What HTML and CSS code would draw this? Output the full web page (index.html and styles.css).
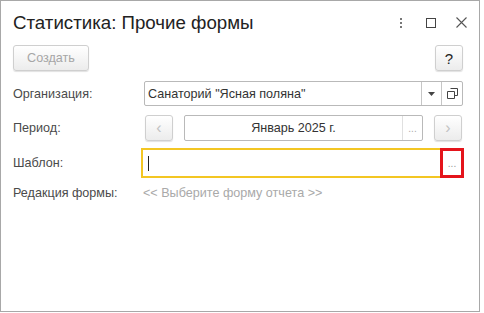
FILE: index.html
```html
<!DOCTYPE html>
<html lang="ru">
<head>
  <meta charset="UTF-8" />
  <title>Статистика: Прочие формы</title>
  <link rel="stylesheet" href="styles.css">
</head>
<body>
  <div class="window">
    <div class="header">
      <div class="title">Статистика: Прочие формы</div>
      <div class="win-controls">
        <span class="ctl kebab"><i></i><i></i><i></i></span>
        <span class="ctl square"></span>
        <span class="ctl close">
          <svg width="11" height="11" viewBox="0 0 11 11"><path d="M0.5 0.5L10.5 10.5M10.5 0.5L0.5 10.5" stroke="#555" stroke-width="1.1" fill="none"/></svg>
        </span>
      </div>
    </div>

    <div class="toolbar">
      <button class="btn btn-create" disabled>Создать</button>
      <button class="btn btn-help">?</button>
    </div>

    <div class="row row-org">
      <div class="label">Организация:</div>
      <div class="field field-org">
        <span class="value">Санаторий "Ясная поляна"</span>
        <span class="fbtn drop"><svg width="7" height="4" viewBox="0 0 7 4"><path d="M0 0H7L3.5 4Z" fill="#444"/></svg></span>
        <span class="fbtn open">
          <svg width="11" height="11" viewBox="0 0 11 11"><path d="M3.5 0.5H10.5V7.5H7.5M0.5 3.5H7.5V10.5H0.5Z" stroke="#444" stroke-width="1" fill="none"/></svg>
        </span>
      </div>
    </div>

    <div class="row row-period">
      <div class="label">Период:</div>
      <div class="period">
        <button class="btn btn-arrow">&lsaquo;</button>
        <div class="field field-period">
          <span class="value">Январь 2025 г.</span>
          <span class="fbtn dots">...</span>
        </div>
        <button class="btn btn-arrow">&rsaquo;</button>
      </div>
    </div>

    <div class="row row-template">
      <div class="label">Шаблон:</div>
      <div class="template">
        <div class="template-input"><span class="caret"></span></div>
        <div class="template-btn">...</div>
      </div>
    </div>

    <div class="row row-edition">
      <div class="label">Редакция формы:</div>
      <div class="hint">&lt;&lt; Выберите форму отчета &gt;&gt;</div>
    </div>
  </div>
</body>
</html>
```
FILE: styles.css
```css
body {
  margin: 0;
  background: #fff;
  font-family: "Liberation Sans", Arial, sans-serif;
  color: #4a4a4a;
  font-size: 12.6px;
}

.window {
  width: 478px;
  height: 310px;
  border: 1px solid #a8a8a8;
  background: #fff;
  box-sizing: content-box;
}

.header {
  display: flex;
  align-items: center;
  justify-content: space-between;
  height: 44px;
  padding: 0 12px 0 12px;
}

.title {
  font-size: 18.7px;
  color: #222;
}

.win-controls {
  display: flex;
  align-items: center;
  margin-top: -1px;
}

.ctl {
  display: flex;
  align-items: center;
  justify-content: center;
}

.kebab {
  flex-direction: column;
  width: 4px;
  gap: 2px;
  margin-right: 23px;
}

.kebab i {
  display: block;
  width: 2px;
  height: 2px;
  background: #777;
}

.square {
  width: 8px;
  height: 8px;
  border: 1px solid #444;
  margin-right: 20px;
}

.close {
  width: 11px;
  height: 11px;
}

.toolbar {
  display: flex;
  justify-content: space-between;
  padding: 0 16px 0 12px;
}

.btn {
  font-family: inherit;
  font-size: 12.6px;
  height: 26px;
  border: 1px solid #cfcfcf;
  border-radius: 3px;
  background: linear-gradient(#ffffff, #ececec);
  box-shadow: 0 1px 1px rgba(0, 0, 0, 0.12);
  color: #333;
  padding: 0;
}

.btn-create {
  width: 76px;
  color: #a6a6a6;
}

.btn-help {
  width: 28px;
  font-size: 15px;
  color: #222;
}

.row {
  display: flex;
  align-items: center;
  padding-left: 12px;
}

.label {
  width: 130px;
  flex: none;
  color: #4a4a4a;
}

.row-org {
  margin-top: 10px;
  height: 25px;
}

.field {
  display: flex;
  align-items: stretch;
  height: 100%;
  border: 1px solid #b9b9b9;
  border-radius: 2px;
  box-sizing: border-box;
  background: #fff;
}

.field .value {
  flex: 1;
  display: flex;
  align-items: center;
  color: #333;
}

.field-org {
  width: 319px;
  margin-left: 1px;
}

.field-org .value {
  padding-left: 3px;
}

.fbtn {
  display: flex;
  align-items: center;
  justify-content: center;
  border-left: 1px solid #c6c6c6;
}

.drop {
  width: 19px;
}

.open {
  width: 20px;
}

.row-period {
  margin-top: 9px;
  height: 26px;
}

.period {
  display: flex;
  align-items: stretch;
  gap: 11px;
  height: 100%;
  margin-left: 2px;
}

.btn-arrow {
  width: 28px;
  font-size: 16px;
  color: #c2c2c2;
  line-height: 1;
}

.field-period {
  width: 239px;
}

.field-period .value {
  justify-content: center;
}

.dots {
  width: 19px;
  color: #aaa;
  font-size: 10px;
  border-left-color: #e0e0e0;
}

.row-template {
  margin-top: 7px;
  height: 30px;
}

.template {
  display: flex;
  height: 100%;
  margin-left: -2px;
}

.template-input {
  width: 299px;
  border: 2px solid #f3c623;
  border-right: none;
  display: flex;
  align-items: center;
  padding-left: 5px;
  box-sizing: border-box;
}

.caret {
  width: 1px;
  height: 15px;
  background: #222;
}

.template-btn {
  width: 24px;
  box-sizing: border-box;
  border: 3px solid #e4141b;
  display: flex;
  align-items: center;
  justify-content: center;
  color: #999;
  font-size: 10px;
}

.row-edition {
  margin-top: 7px;
  height: 16px;
}

.hint {
  color: #a9a9a9;
}
```
